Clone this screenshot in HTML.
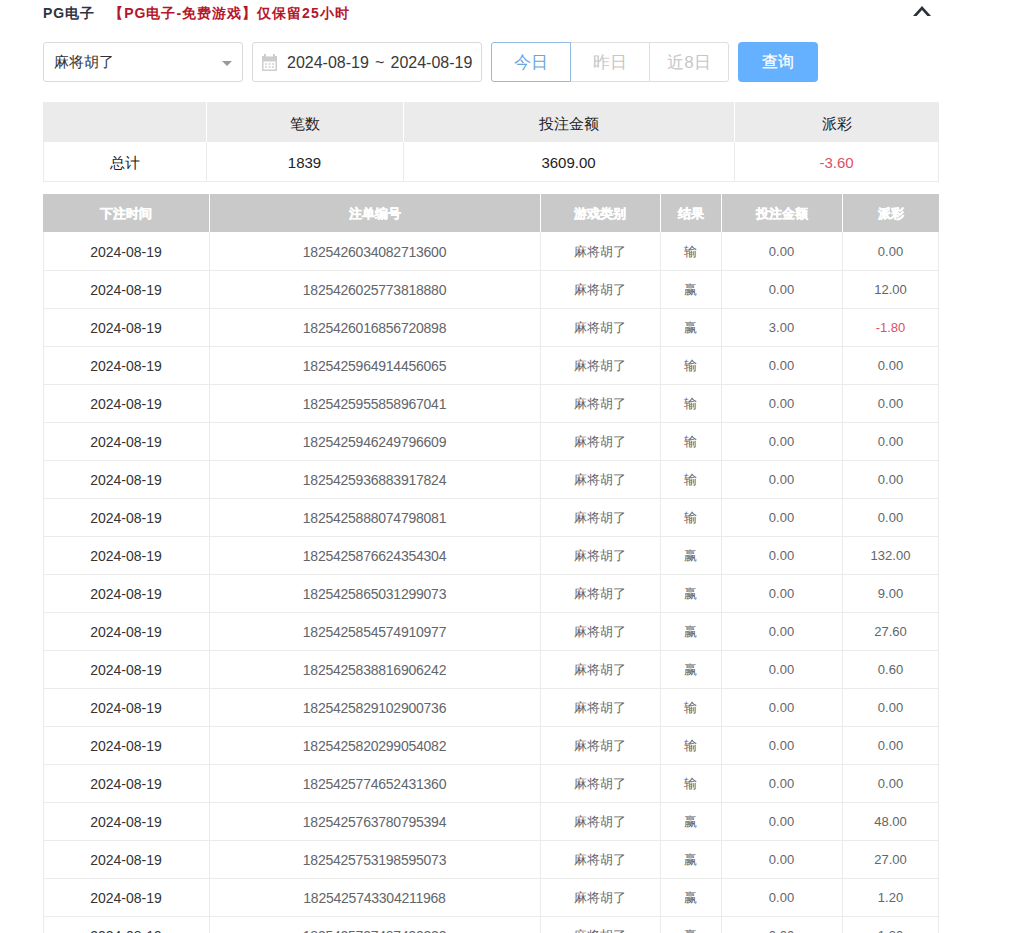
<!DOCTYPE html>
<html><head><meta charset="utf-8">
<style>
*{box-sizing:border-box;margin:0;padding:0}
html,body{width:1019px;height:933px;overflow:hidden;background:#fff;font-family:"Liberation Sans",sans-serif;color:#333;position:relative}
div,span,svg{position:absolute}
.title span,.sel span.st1,.date span.dtx,.btn span,.q span{position:relative}
.dtx{top:1px;word-spacing:1.7px}
.btn span{top:1px}
.q span{top:0px}
.title{left:43px;top:3px;height:20px;line-height:20px;font-size:14px;font-weight:bold;white-space:nowrap;letter-spacing:1px}
.title .a{color:#2e3440}
.title .b{color:#b5162b;margin-left:14px}
.caret{left:912px;top:4px}
.sel{left:43px;top:42px;width:200px;height:40px;border:1px solid #d9d9d9;border-radius:3px;font-size:15px;line-height:38px;padding-left:10px;color:#333;white-space:nowrap}
.sel .tri{left:178px;top:18px;width:0;height:0;border-left:5px solid transparent;border-right:5px solid transparent;border-top:5px solid #999}
.date{left:252px;top:42px;width:230px;height:40px;border:1px solid #d9d9d9;border-radius:3px;font-size:16px;line-height:38px;padding-left:34px;color:#3a3a3a;white-space:nowrap}
.cal{left:8px;top:11px}
.btn{top:42px;width:80px;height:40px;border:1px solid #dedede;font-size:17px;line-height:38px;text-align:center;color:#c6c6c6;background:#fff;white-space:nowrap}
.b1{left:491px;border-color:#93bbe2;color:#66a6e4;border-radius:3px 0 0 3px;z-index:2}
.b2{left:570px}
.b3{left:649px;border-radius:0 3px 3px 0}
.q{left:738px;top:42px;width:80px;height:40px;background:#66b1ff;border-radius:4px;color:#fff;font-size:16px;font-weight:normal;-webkit-text-stroke:0.25px #fff;line-height:40px;text-align:center}
.sh{left:43px;top:102px;width:896px;height:40px;background:#ebebeb}
.vw{width:1px;background:#fff}
.vl{width:1px;background:#ebebeb}
.hl{height:1px;background:#ebebeb}
.st{height:40px;line-height:40px;text-align:center;font-size:15px;color:#222;white-space:nowrap}
.st.h{top:104px}
.st.b{top:143px}
.dh{left:43px;top:194px;width:896px;height:38px;background:#c9c9c9}
.dt{height:38px;line-height:38px;text-align:center;white-space:nowrap}
.th{top:195px;color:#fff;font-size:13px;font-weight:bold;-webkit-text-stroke:0.4px #fff}
.td{font-size:13px;color:#62656a}
.td.c0{font-size:14px;color:#333}
.td.c1{font-size:14px;letter-spacing:-0.24px}
.td{padding-top:1px}
.red{color:#e0505f !important}

</style></head><body>
<div class="title"><span class="a">PG电子</span><span class="b">【PG电子-免费游戏】仅保留25小时</span></div>
<svg class="caret" width="20" height="13" viewBox="0 0 20 13"><path d="M1 12 L10 2.1 L19 12 L15.4 12 L10 5.9 L4.6 12 Z" fill="#2b303a"/></svg>
<div class="sel"><span class="st1">麻将胡了</span><span class="tri"></span></div>
<div class="date"><svg class="cal" width="18" height="18" viewBox="0 0 18 18"><rect x="1" y="2" width="15" height="15" fill="#cdcdcd"/><rect x="2.5" y="7.5" width="12" height="8" fill="#fff"/><rect x="3" y="0" width="2" height="3" fill="#cdcdcd"/><rect x="12" y="0" width="2" height="3" fill="#cdcdcd"/><rect x="5" y="2" width="7" height="1" fill="#e4e4e4"/><g fill="#dcdcdc"><rect x="4" y="9" width="2" height="2"/><rect x="7.5" y="9" width="2" height="2"/><rect x="11" y="9" width="2" height="2"/><rect x="4" y="12" width="2" height="2"/><rect x="7.5" y="12" width="2" height="2"/><rect x="11" y="12" width="2" height="2"/></g></svg><span class="dtx">2024-08-19 ~ 2024-08-19</span></div>
<div class="btn b1"><span>今日</span></div><div class="btn b2"><span>昨日</span></div><div class="btn b3"><span>近8日</span></div>
<div class="q"><span>查询</span></div>
<div class="sum">
<div class="sh"></div>
<div class="vw" style="left:206px;top:102px;height:40px"></div>
<div class="vl" style="left:206px;top:142px;height:40px"></div>
<div class="vw" style="left:403px;top:102px;height:40px"></div>
<div class="vl" style="left:403px;top:142px;height:40px"></div>
<div class="vw" style="left:734px;top:102px;height:40px"></div>
<div class="vl" style="left:734px;top:142px;height:40px"></div>
<div class="vl" style="left:43px;top:142px;height:40px"></div><div class="vl" style="left:938px;top:142px;height:40px"></div>
<div class="hl" style="left:43px;top:181px;width:896px"></div>
<div class="st h" style="left:43px;width:163px"></div>
<div class="st b" style="left:43px;width:163px">总计</div>
<div class="st h" style="left:206px;width:197px">笔数</div>
<div class="st b" style="left:206px;width:197px">1839</div>
<div class="st h" style="left:403px;width:331px">投注金额</div>
<div class="st b" style="left:403px;width:331px">3609.00</div>
<div class="st h" style="left:734px;width:205px">派彩</div>
<div class="st b red" style="left:734px;width:205px">-3.60</div>
</div>
<div class="dh"></div>
<div class="dt th" style="left:43px;width:166px">下注时间</div>
<div class="dt th" style="left:209px;width:331px">注单编号</div>
<div class="dt th" style="left:540px;width:120px">游戏类别</div>
<div class="dt th" style="left:660px;width:61px">结果</div>
<div class="dt th" style="left:721px;width:121px">投注金额</div>
<div class="dt th" style="left:842px;width:97px">派彩</div>
<div class="vw" style="left:209px;top:194px;height:38px"></div>
<div class="vw" style="left:540px;top:194px;height:38px"></div>
<div class="vw" style="left:660px;top:194px;height:38px"></div>
<div class="vw" style="left:721px;top:194px;height:38px"></div>
<div class="vw" style="left:842px;top:194px;height:38px"></div>
<div class="vl" style="left:209px;top:232px;height:701px"></div>
<div class="vl" style="left:540px;top:232px;height:701px"></div>
<div class="vl" style="left:660px;top:232px;height:701px"></div>
<div class="vl" style="left:721px;top:232px;height:701px"></div>
<div class="vl" style="left:842px;top:232px;height:701px"></div>
<div class="vl" style="left:43px;top:232px;height:701px"></div>
<div class="vl" style="left:938px;top:232px;height:701px"></div>
<div class="hl" style="left:43px;top:270px;width:896px"></div>
<div class="dt td c0" style="left:43px;width:166px;top:232px">2024-08-19</div>
<div class="dt td c1" style="left:209px;width:331px;top:232px">1825426034082713600</div>
<div class="dt td c2" style="left:540px;width:120px;top:232px">麻将胡了</div>
<div class="dt td c3" style="left:660px;width:61px;top:232px">输</div>
<div class="dt td c4" style="left:721px;width:121px;top:232px">0.00</div>
<div class="dt td c5" style="left:842px;width:97px;top:232px">0.00</div>
<div class="hl" style="left:43px;top:308px;width:896px"></div>
<div class="dt td c0" style="left:43px;width:166px;top:270px">2024-08-19</div>
<div class="dt td c1" style="left:209px;width:331px;top:270px">1825426025773818880</div>
<div class="dt td c2" style="left:540px;width:120px;top:270px">麻将胡了</div>
<div class="dt td c3" style="left:660px;width:61px;top:270px">赢</div>
<div class="dt td c4" style="left:721px;width:121px;top:270px">0.00</div>
<div class="dt td c5" style="left:842px;width:97px;top:270px">12.00</div>
<div class="hl" style="left:43px;top:346px;width:896px"></div>
<div class="dt td c0" style="left:43px;width:166px;top:308px">2024-08-19</div>
<div class="dt td c1" style="left:209px;width:331px;top:308px">1825426016856720898</div>
<div class="dt td c2" style="left:540px;width:120px;top:308px">麻将胡了</div>
<div class="dt td c3" style="left:660px;width:61px;top:308px">赢</div>
<div class="dt td c4" style="left:721px;width:121px;top:308px">3.00</div>
<div class="dt td c5 red" style="left:842px;width:97px;top:308px">-1.80</div>
<div class="hl" style="left:43px;top:384px;width:896px"></div>
<div class="dt td c0" style="left:43px;width:166px;top:346px">2024-08-19</div>
<div class="dt td c1" style="left:209px;width:331px;top:346px">1825425964914456065</div>
<div class="dt td c2" style="left:540px;width:120px;top:346px">麻将胡了</div>
<div class="dt td c3" style="left:660px;width:61px;top:346px">输</div>
<div class="dt td c4" style="left:721px;width:121px;top:346px">0.00</div>
<div class="dt td c5" style="left:842px;width:97px;top:346px">0.00</div>
<div class="hl" style="left:43px;top:422px;width:896px"></div>
<div class="dt td c0" style="left:43px;width:166px;top:384px">2024-08-19</div>
<div class="dt td c1" style="left:209px;width:331px;top:384px">1825425955858967041</div>
<div class="dt td c2" style="left:540px;width:120px;top:384px">麻将胡了</div>
<div class="dt td c3" style="left:660px;width:61px;top:384px">输</div>
<div class="dt td c4" style="left:721px;width:121px;top:384px">0.00</div>
<div class="dt td c5" style="left:842px;width:97px;top:384px">0.00</div>
<div class="hl" style="left:43px;top:460px;width:896px"></div>
<div class="dt td c0" style="left:43px;width:166px;top:422px">2024-08-19</div>
<div class="dt td c1" style="left:209px;width:331px;top:422px">1825425946249796609</div>
<div class="dt td c2" style="left:540px;width:120px;top:422px">麻将胡了</div>
<div class="dt td c3" style="left:660px;width:61px;top:422px">输</div>
<div class="dt td c4" style="left:721px;width:121px;top:422px">0.00</div>
<div class="dt td c5" style="left:842px;width:97px;top:422px">0.00</div>
<div class="hl" style="left:43px;top:498px;width:896px"></div>
<div class="dt td c0" style="left:43px;width:166px;top:460px">2024-08-19</div>
<div class="dt td c1" style="left:209px;width:331px;top:460px">1825425936883917824</div>
<div class="dt td c2" style="left:540px;width:120px;top:460px">麻将胡了</div>
<div class="dt td c3" style="left:660px;width:61px;top:460px">输</div>
<div class="dt td c4" style="left:721px;width:121px;top:460px">0.00</div>
<div class="dt td c5" style="left:842px;width:97px;top:460px">0.00</div>
<div class="hl" style="left:43px;top:536px;width:896px"></div>
<div class="dt td c0" style="left:43px;width:166px;top:498px">2024-08-19</div>
<div class="dt td c1" style="left:209px;width:331px;top:498px">1825425888074798081</div>
<div class="dt td c2" style="left:540px;width:120px;top:498px">麻将胡了</div>
<div class="dt td c3" style="left:660px;width:61px;top:498px">输</div>
<div class="dt td c4" style="left:721px;width:121px;top:498px">0.00</div>
<div class="dt td c5" style="left:842px;width:97px;top:498px">0.00</div>
<div class="hl" style="left:43px;top:574px;width:896px"></div>
<div class="dt td c0" style="left:43px;width:166px;top:536px">2024-08-19</div>
<div class="dt td c1" style="left:209px;width:331px;top:536px">1825425876624354304</div>
<div class="dt td c2" style="left:540px;width:120px;top:536px">麻将胡了</div>
<div class="dt td c3" style="left:660px;width:61px;top:536px">赢</div>
<div class="dt td c4" style="left:721px;width:121px;top:536px">0.00</div>
<div class="dt td c5" style="left:842px;width:97px;top:536px">132.00</div>
<div class="hl" style="left:43px;top:612px;width:896px"></div>
<div class="dt td c0" style="left:43px;width:166px;top:574px">2024-08-19</div>
<div class="dt td c1" style="left:209px;width:331px;top:574px">1825425865031299073</div>
<div class="dt td c2" style="left:540px;width:120px;top:574px">麻将胡了</div>
<div class="dt td c3" style="left:660px;width:61px;top:574px">赢</div>
<div class="dt td c4" style="left:721px;width:121px;top:574px">0.00</div>
<div class="dt td c5" style="left:842px;width:97px;top:574px">9.00</div>
<div class="hl" style="left:43px;top:650px;width:896px"></div>
<div class="dt td c0" style="left:43px;width:166px;top:612px">2024-08-19</div>
<div class="dt td c1" style="left:209px;width:331px;top:612px">1825425854574910977</div>
<div class="dt td c2" style="left:540px;width:120px;top:612px">麻将胡了</div>
<div class="dt td c3" style="left:660px;width:61px;top:612px">赢</div>
<div class="dt td c4" style="left:721px;width:121px;top:612px">0.00</div>
<div class="dt td c5" style="left:842px;width:97px;top:612px">27.60</div>
<div class="hl" style="left:43px;top:688px;width:896px"></div>
<div class="dt td c0" style="left:43px;width:166px;top:650px">2024-08-19</div>
<div class="dt td c1" style="left:209px;width:331px;top:650px">1825425838816906242</div>
<div class="dt td c2" style="left:540px;width:120px;top:650px">麻将胡了</div>
<div class="dt td c3" style="left:660px;width:61px;top:650px">赢</div>
<div class="dt td c4" style="left:721px;width:121px;top:650px">0.00</div>
<div class="dt td c5" style="left:842px;width:97px;top:650px">0.60</div>
<div class="hl" style="left:43px;top:726px;width:896px"></div>
<div class="dt td c0" style="left:43px;width:166px;top:688px">2024-08-19</div>
<div class="dt td c1" style="left:209px;width:331px;top:688px">1825425829102900736</div>
<div class="dt td c2" style="left:540px;width:120px;top:688px">麻将胡了</div>
<div class="dt td c3" style="left:660px;width:61px;top:688px">输</div>
<div class="dt td c4" style="left:721px;width:121px;top:688px">0.00</div>
<div class="dt td c5" style="left:842px;width:97px;top:688px">0.00</div>
<div class="hl" style="left:43px;top:764px;width:896px"></div>
<div class="dt td c0" style="left:43px;width:166px;top:726px">2024-08-19</div>
<div class="dt td c1" style="left:209px;width:331px;top:726px">1825425820299054082</div>
<div class="dt td c2" style="left:540px;width:120px;top:726px">麻将胡了</div>
<div class="dt td c3" style="left:660px;width:61px;top:726px">输</div>
<div class="dt td c4" style="left:721px;width:121px;top:726px">0.00</div>
<div class="dt td c5" style="left:842px;width:97px;top:726px">0.00</div>
<div class="hl" style="left:43px;top:802px;width:896px"></div>
<div class="dt td c0" style="left:43px;width:166px;top:764px">2024-08-19</div>
<div class="dt td c1" style="left:209px;width:331px;top:764px">1825425774652431360</div>
<div class="dt td c2" style="left:540px;width:120px;top:764px">麻将胡了</div>
<div class="dt td c3" style="left:660px;width:61px;top:764px">输</div>
<div class="dt td c4" style="left:721px;width:121px;top:764px">0.00</div>
<div class="dt td c5" style="left:842px;width:97px;top:764px">0.00</div>
<div class="hl" style="left:43px;top:840px;width:896px"></div>
<div class="dt td c0" style="left:43px;width:166px;top:802px">2024-08-19</div>
<div class="dt td c1" style="left:209px;width:331px;top:802px">1825425763780795394</div>
<div class="dt td c2" style="left:540px;width:120px;top:802px">麻将胡了</div>
<div class="dt td c3" style="left:660px;width:61px;top:802px">赢</div>
<div class="dt td c4" style="left:721px;width:121px;top:802px">0.00</div>
<div class="dt td c5" style="left:842px;width:97px;top:802px">48.00</div>
<div class="hl" style="left:43px;top:878px;width:896px"></div>
<div class="dt td c0" style="left:43px;width:166px;top:840px">2024-08-19</div>
<div class="dt td c1" style="left:209px;width:331px;top:840px">1825425753198595073</div>
<div class="dt td c2" style="left:540px;width:120px;top:840px">麻将胡了</div>
<div class="dt td c3" style="left:660px;width:61px;top:840px">赢</div>
<div class="dt td c4" style="left:721px;width:121px;top:840px">0.00</div>
<div class="dt td c5" style="left:842px;width:97px;top:840px">27.00</div>
<div class="hl" style="left:43px;top:916px;width:896px"></div>
<div class="dt td c0" style="left:43px;width:166px;top:878px">2024-08-19</div>
<div class="dt td c1" style="left:209px;width:331px;top:878px">1825425743304211968</div>
<div class="dt td c2" style="left:540px;width:120px;top:878px">麻将胡了</div>
<div class="dt td c3" style="left:660px;width:61px;top:878px">赢</div>
<div class="dt td c4" style="left:721px;width:121px;top:878px">0.00</div>
<div class="dt td c5" style="left:842px;width:97px;top:878px">1.20</div>
<div class="hl" style="left:43px;top:954px;width:896px"></div>
<div class="dt td c0" style="left:43px;width:166px;top:916px">2024-08-19</div>
<div class="dt td c1" style="left:209px;width:331px;top:916px">1825425737487490333</div>
<div class="dt td c2" style="left:540px;width:120px;top:916px">麻将胡了</div>
<div class="dt td c3" style="left:660px;width:61px;top:916px">赢</div>
<div class="dt td c4" style="left:721px;width:121px;top:916px">0.00</div>
<div class="dt td c5" style="left:842px;width:97px;top:916px">1.20</div>
</body></html>
